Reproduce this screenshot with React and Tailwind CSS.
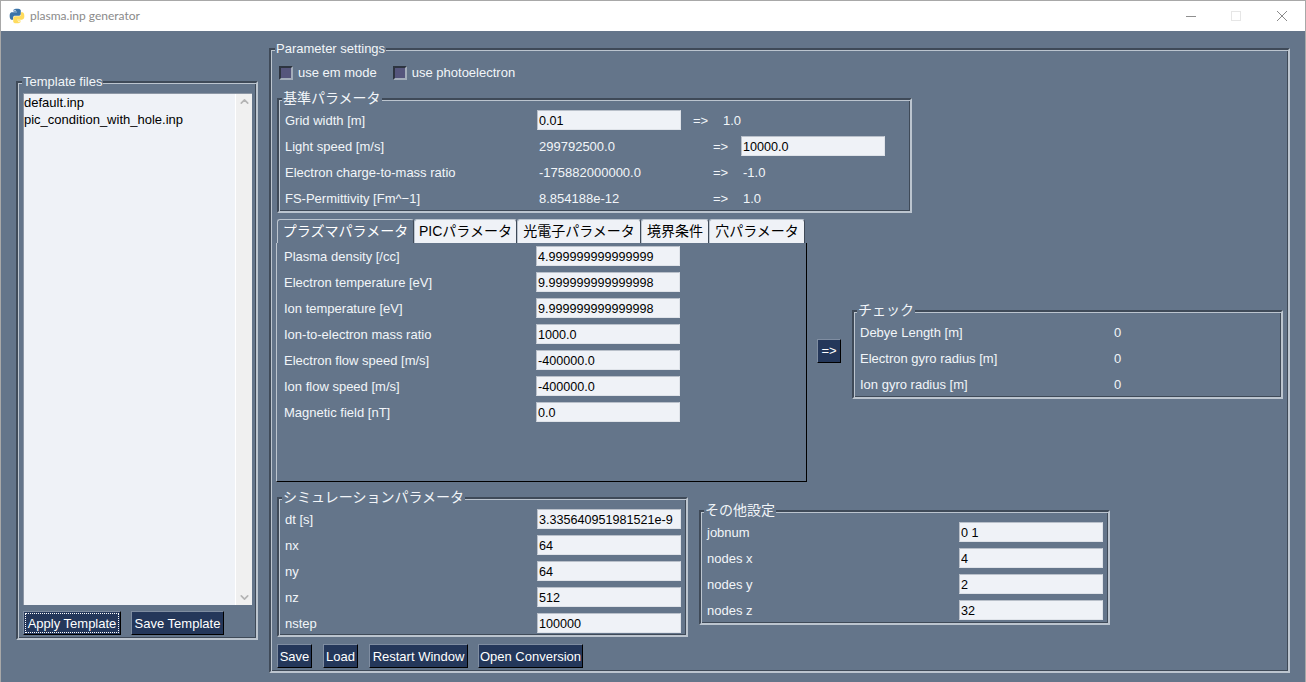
import { ChevronUp, ChevronDown } from "lucide-react";

const groove =
  "relative border-2 border-t-[#3f4a58] border-l-[#3f4a58] border-r-[#bcc5cf] border-b-[#bcc5cf] shadow-[inset_1px_1px_0_#bcc5cf,inset_-1px_-1px_0_#3f4a58]";

const Group = ({ title, cjk, className = "", children }) => (
  <div className={`${groove} ${className}`}>
    <span
      className={`absolute bg-[#64758a] px-px leading-[16px] text-[#f2f5f9] ${
        cjk ? "-top-[10px] left-[3px] text-[14px]" : "-top-[9px] left-[4px]"
      }`}
    >
      {title}
    </span>
    {children}
  </div>
);

const Field = ({ value }) => (
  <input
    readOnly
    value={value}
    className="h-5 w-[144px] border border-t-[#b9c0ca] border-l-[#b9c0ca] border-r-[#dfe3e9] border-b-[#dfe3e9] bg-[#eff2f7] px-px pt-px text-[12.6px] text-black outline-none"
  />
);

const Row = ({ label, labelWidth = "w-[252px]", children }) => (
  <div className="flex h-5 items-center [&>span]:pt-px">
    <span className={`${labelWidth} shrink-0`}>{label}</span>
    {children}
  </div>
);

const Button = ({ children, focused, className = "" }) => (
  <button
    className={`h-6 border border-t-[#7f8da1] border-l-[#7f8da1] border-r-black border-b-black bg-[#24375a] pt-px text-[13px] text-white ${
      focused ? "outline-1 -outline-offset-3 outline-dotted outline-white" : ""
    } ${className}`}
  >
    {children}
  </button>
);

const Check = ({ label, className = "" }) => (
  <div className={`flex h-[15px] items-center ${className}`}>
    <span className="h-[14px] w-[14px] border-2 border-t-[#2d3440] border-l-[#2d3440] border-r-[#a3adba] border-b-[#a3adba] bg-[#55557c]" />
    <span className="ml-[5px]">{label}</span>
  </div>
);

const Tab = ({ label, active, width }) => (
  <div
    className={`flex h-6 items-center justify-center rounded-t-[3px] border-t border-l border-t-[#bcc5cf] border-l-[#bcc5cf] border-r border-r-[#3f4a58] text-[14px] ${width} ${
      active ? "bg-[#64758a] text-white" : "bg-[#eff2f7] text-black"
    }`}
  >
    {label}
  </div>
);

const plasma = [
  ["Plasma density [/cc]", "4.999999999999999"],
  ["Electron temperature [eV]", "9.999999999999998"],
  ["Ion temperature [eV]", "9.999999999999998"],
  ["Ion-to-electron mass ratio", "1000.0"],
  ["Electron flow speed [m/s]", "-400000.0"],
  ["Ion flow speed [m/s]", "-400000.0"],
  ["Magnetic field [nT]", "0.0"],
];

const simulation = [
  ["dt [s]", "3.335640951981521e-9"],
  ["nx", "64"],
  ["ny", "64"],
  ["nz", "512"],
  ["nstep", "100000"],
];

const other = [
  ["jobnum", "0 1"],
  ["nodes x", "4"],
  ["nodes y", "2"],
  ["nodes z", "32"],
];

const checks = ["Debye Length [m]", "Electron gyro radius [m]", "Ion gyro radius [m]"];

const PythonLogo = () => (
  <svg width="16" height="16" viewBox="0 0 24 24">
    <path
      fill="#3a73a8"
      fillRule="evenodd"
      d="M11.9 1C6.5 1 6.8 3.4 6.8 3.4v2.4h5.2v.7H4.7S1 6.1 1 11.9s3.2 5.6 3.2 5.6h1.9v-2.7s-.1-3.2 3.2-3.2h5.4s3 0 3-3V3.9S18 1 11.9 1zM9 2.7a1 1 0 110 2 1 1 0 010-2z"
    />
    <path
      fill="#ffdc5e"
      fillRule="evenodd"
      transform="rotate(180 12 12)"
      d="M11.9 1C6.5 1 6.8 3.4 6.8 3.4v2.4h5.2v.7H4.7S1 6.1 1 11.9s3.2 5.6 3.2 5.6h1.9v-2.7s-.1-3.2 3.2-3.2h5.4s3 0 3-3V3.9S18 1 11.9 1zM9 2.7a1 1 0 110 2 1 1 0 010-2z"
    />
  </svg>
);

export default function App() {
  return (
    <div className="flex h-[682px] w-[1306px] flex-col overflow-hidden border border-b-0 border-[#a8a8a8] bg-[#64758a] text-[13px] text-[#f2f5f9] [font-family:'Liberation_Sans','Noto_Sans_CJK_JP',sans-serif]">
      {/* title bar */}
      <div className="flex h-[30px] shrink-0 items-center bg-white pl-[8px] text-[#8a8a8a]">
        <PythonLogo />
        <span className="ml-[5px] -mt-px text-[12px] [font-family:'Lato',sans-serif]">plasma.inp generator</span>
        <div className="ml-auto flex items-center pr-[18px]">
          <span className="h-px w-[10px] bg-[#8f8f8f]" />
          <span className="ml-[35px] h-[10px] w-[10px] border border-[#e6e6e6]" />
          <svg className="ml-[36px]" width="10" height="10" viewBox="0 0 10 10">
            <path d="M0 0L10 10M10 0L0 10" stroke="#8a8a8a" strokeWidth="1" />
          </svg>
        </div>
      </div>

      <div className="flex flex-1 items-start pl-[15px]">
        {/* template files */}
        <Group title="Template files" className="mt-[50px] w-[242px] pl-[5px] pt-[10px] pb-[3px]">
          <div className="flex h-[512px] w-[229px] border-t border-l border-t-[#8d97a5] border-l-[#8d97a5] bg-[#eff2f7] text-black">
            <div className="flex-1 leading-[17px]">
              <div>default.inp</div>
              <div>pic_condition_with_hole.inp</div>
            </div>
            <div className="flex w-[17px] flex-col items-center justify-between border-l border-l-white bg-[#f0f0f0] py-[1px] text-[#b4b4b4]">
              <ChevronUp size={13} strokeWidth={3} />
              <ChevronDown size={13} strokeWidth={3} />
            </div>
          </div>
          <div className="mt-[6px] flex gap-[10px]">
            <Button focused className="w-[98px]">Apply Template</Button>
            <Button className="w-[93px]">Save Template</Button>
          </div>
        </Group>

        {/* parameter settings */}
        <Group title="Parameter settings" className="ml-[11px] mt-[17px] w-[1021px] pl-[6px] pt-[15px] pb-[3px]">
          <div className="flex pl-[2px]">
            <Check label="use em mode" />
            <Check label="use photoelectron" className="ml-[16px]" />
          </div>

          <Group cjk title="基準パラメータ" className="mt-[18px] flex w-[635px] flex-col gap-[6px] pl-[6px] pt-[10px] pb-[3px]">
            <Row label="Grid width [m]">
              <Field value="0.01" />
              <span className="ml-[12px] w-[30px]">{"=>"}</span>
              <span>1.0</span>
            </Row>
            <Row label="Light speed [m/s]">
              <span className="ml-[2px] w-[174px]">299792500.0</span>
              <span className="w-[28px]">{"=>"}</span>
              <Field value="10000.0" />
            </Row>
            <Row label="Electron charge-to-mass ratio">
              <span className="ml-[2px] w-[174px]">-175882000000.0</span>
              <span className="w-[30px]">{"=>"}</span>
              <span>-1.0</span>
            </Row>
            <Row label="FS-Permittivity [Fm^−1]">
              <span className="ml-[2px] w-[174px]">8.854188e-12</span>
              <span className="w-[30px]">{"=>"}</span>
              <span>1.0</span>
            </Row>
          </Group>

          <div className="mt-[6px] -ml-px flex items-center">
            <div className="w-[531px]">
              <div className="flex pl-px">
                <Tab active label="プラズマパラメータ" width="w-[137px]" />
                <Tab label="PICパラメータ" width="w-[103px]" />
                <Tab label="光電子パラメータ" width="w-[124px]" />
                <Tab label="境界条件" width="w-[68px]" />
                <Tab label="穴パラメータ" width="w-[96px]" />
              </div>
              <div className="flex h-[239px] flex-col gap-[6px] border border-t-0 border-l-[#bcc5cf] border-r-black border-b-black pl-[7px] pt-[3px]">
                {plasma.map(([label, value]) => (
                  <Row key={label} label={label}>
                    <Field value={value} />
                  </Row>
                ))}
              </div>
            </div>
            <Button className="ml-[10px] w-[24px]">{"=>"}</Button>
            <Group cjk title="チェック" className="ml-[11px] mt-[8px] flex w-[431px] flex-col gap-[6px] pl-[6px] pt-[10px] pb-[3px]">
              {checks.map((label) => (
                <Row key={label} label={label} labelWidth="w-[254px]">
                  <span>0</span>
                </Row>
              ))}
            </Group>
          </div>

          <div className="mt-[15px] flex items-start">
            <Group cjk title="シミュレーションパラメータ" className="flex w-[411px] flex-col gap-[6px] pl-[6px] pt-[10px] pb-[2px]">
              {simulation.map(([label, value]) => (
                <Row key={label} label={label}>
                  <Field value={value} />
                </Row>
              ))}
            </Group>
            <Group cjk title="その他設定" className="ml-[11px] mt-[13px] flex w-[411px] flex-col gap-[6px] pl-[6px] pt-[10px] pb-[3px]">
              {other.map(([label, value]) => (
                <Row key={label} label={label}>
                  <Field value={value} />
                </Row>
              ))}
            </Group>
          </div>

          <div className="mt-[7px] flex">
            <Button className="w-[35px]">Save</Button>
            <Button className="ml-[11px] w-[35px]">Load</Button>
            <Button className="ml-[11px] w-[99px]">Restart Window</Button>
            <Button className="ml-[10px] w-[105px]">Open Conversion</Button>
          </div>
        </Group>
      </div>
    </div>
  );
}
